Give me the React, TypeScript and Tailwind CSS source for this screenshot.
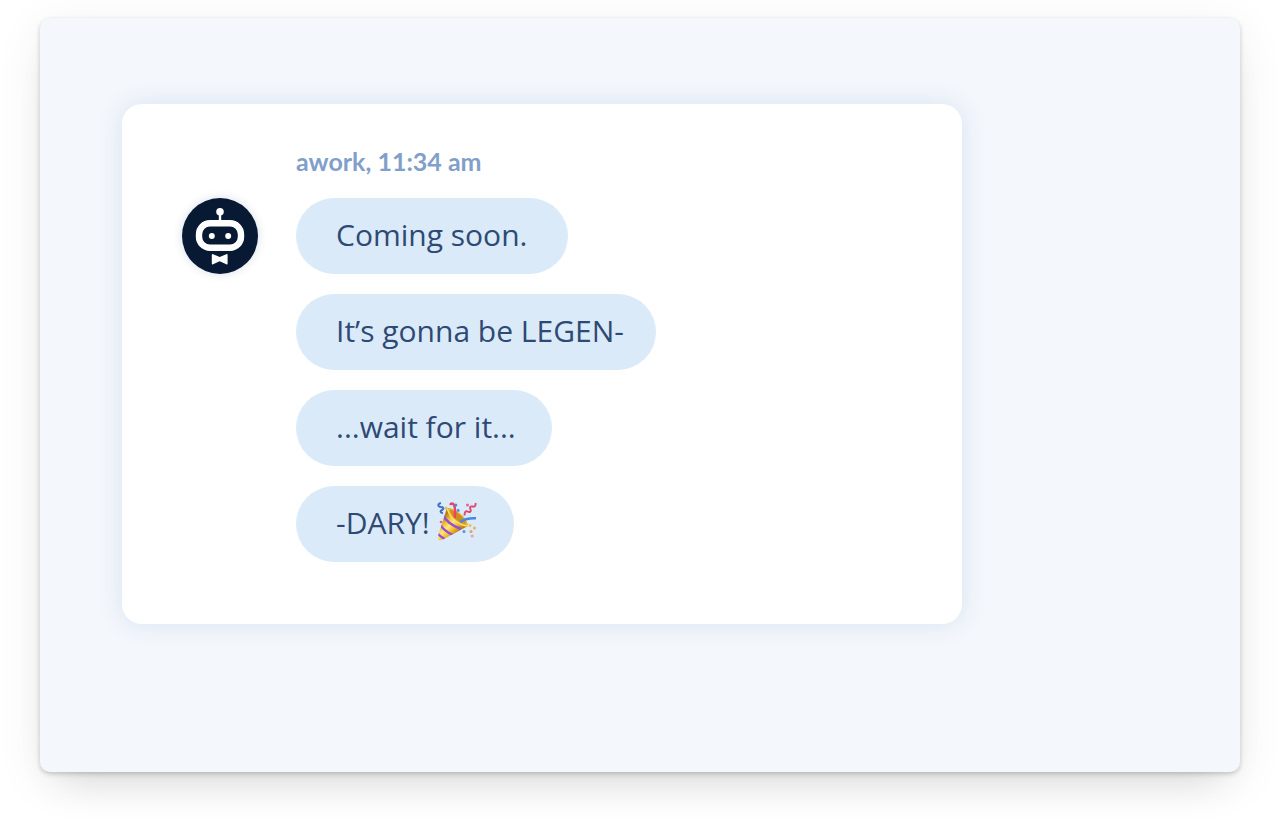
interface Message {
  text: string;
  width: string;
  party?: boolean;
}

const messages: Message[] = [
  { text: 'Coming soon.', width: 'w-[272px]' },
  { text: 'It’s gonna be LEGEN-', width: 'w-[360px]' },
  { text: '...wait for it...', width: 'w-[256px]' },
  { text: '-DARY!', width: 'w-[218px]', party: true },
];

function BotAvatar() {
  return (
    <div className="size-19 shrink-0 rounded-full bg-[#071933] shadow-[0_0_10px_rgba(20,50,110,0.16)]">
      <svg viewBox="0 0 76 76" className="size-full" role="img" aria-label="awork bot">
        <circle cx="38" cy="13.8" r="3.8" fill="#fff" />
        <path d="M38 14v11" stroke="#fff" strokeWidth="2.4" />
        <rect x="17" y="25.2" width="42" height="24.6" rx="11" fill="none" stroke="#fff" strokeWidth="6.4" />
        <circle cx="29.8" cy="38" r="3" fill="#fff" />
        <circle cx="46.2" cy="38" r="3" fill="#fff" />
        <path
          d="M29.8 57q0-1.4 1.3-.8l6.6 2.7 6.6-2.7q1.3-.6 1.3.8v8.4q0 1.4-1.3.8l-6.6-2.9-6.6 2.9q-1.3.6-1.3-.8z"
          fill="#fff"
        />
      </svg>
    </div>
  );
}

function PartyPopper() {
  return (
    <svg viewBox="0 0 40 40" className="size-10" fill="none" role="img" aria-label="party popper">
      <defs>
        <linearGradient id="cone" x1="4" y1="17" x2="19" y2="32" gradientUnits="userSpaceOnUse">
          <stop stopColor="#b97816" />
          <stop offset=".25" stopColor="#f0bd2d" />
          <stop offset=".5" stopColor="#ffe878" />
          <stop offset=".75" stopColor="#f3bd2b" />
          <stop offset="1" stopColor="#bd7d1a" />
        </linearGradient>
        <clipPath id="coneClip">
          <path d="M10 6 1 34c-1 4 1.5 5 5 3.5L31 24C29 15 20 7 10 6z" />
        </clipPath>
      </defs>
      <path d="M10 6 1 34c-1 4 1.5 5 5 3.5L31 24C29 15 20 7 10 6z" fill="url(#cone)" />
      <g clipPath="url(#coneClip)" stroke="#9150d8" strokeWidth="2.4">
        <path d="M6 13c2 5 9 11 18 14" />
        <path d="M3 22c2 4 6 8 13 11" />
        <path d="M0 31c2 2 4 4 8 6" />
      </g>
      <path d="M10 6c8 0 19 8 21 17.5-1.5 2-7 .5-12-4S9 9 10 6z" fill="#e8b12e" />
      <path d="M13 8c7 1 14 7 16 13.5-4 0-8-2-11-5S13 10 13 8z" fill="#c98f24" />
      <path d="M10.5 6.5C11 11 15 16.5 20 20s9 4.500 11 3.500" stroke="#ffe066" strokeWidth="1.3" />
      <path d="M17.7 16c.6-5 .8-10-.7-13-1-2-3-2-4-.2" stroke="#ef4168" strokeWidth="2.4" />
      <path d="M23 20c5-3.5 10-4 16-3.700" stroke="#4687e6" strokeWidth="2.6" />
      <path d="M4 1C0 2 1 5 4 5s3 2 1 3-2 3 1 3" stroke="#416fc9" strokeWidth="2" />
      <path d="M38.5 1c.5 3-1 4-3 3.5s-3 .5-2 3-1 3-3 2-3 1-3 4" stroke="#e0446f" strokeWidth="1.9" />
      <circle cx="18.8" cy="3" r="1.5" fill="#4c8ae0" />
      <circle cx="30.5" cy="3" r="1.5" fill="#e5668b" />
      <circle cx="21.2" cy="8.5" r="1.4" fill="#4f8de2" />
      <circle cx="9" cy="6" r="1.3" fill="#e9c03c" />
      <circle cx="4" cy="20" r="1.3" fill="#db6480" />
      <circle cx="33" cy="23.5" r="1.5" fill="#edc23e" />
      <circle cx="37.5" cy="26" r="1.5" fill="#e8ad6a" />
      <circle cx="27" cy="29.5" r="1.5" fill="#5592e2" />
      <circle cx="34" cy="29.5" r="1.6" fill="#e6a552" />
      <circle cx="35.2" cy="34" r="1.6" fill="#e4a5b9" />
    </svg>
  );
}

function Bubble({ text, width, party }: Message) {
  return (
    <li className={`flex h-19 items-center gap-[7px] rounded-full bg-[#dbeaf9] pb-0.5 pl-10 ${width}`}>
      <span className="whitespace-nowrap">{text}</span>
      {party && (
        <span className="shrink-0 pb-0.5">
          <PartyPopper />
        </span>
      )}
    </li>
  );
}

export default function App() {
  return (
    <div className="bg-white px-10 pt-[18px] pb-15">
      <main className="min-h-[754px] rounded-[10px] bg-[#f4f7fc] px-[82px] py-[86px] shadow-[0_2px_5px_rgba(0,0,0,0.2),0_10px_50px_rgba(0,0,0,0.07),0_25px_40px_-20px_rgba(0,0,0,0.12)]">
        {/* Chat card */}
        <section className="max-w-[840px] rounded-[20px] bg-white px-15 pt-[38px] pb-[62px] shadow-[0_0_24px_rgba(70,120,180,0.15)]">
          <div className="flex items-start gap-[38px]">
            <div className="pt-14">
              <BotAvatar />
            </div>
            <div>
              <h1 className="mb-[18px] font-['Lato',sans-serif] text-[25px] leading-[38px] font-bold text-[#819fca]">
                awork, 11:34 am
              </h1>
              <ul className="flex flex-col gap-5 font-['Open_Sans',sans-serif] text-[30px] leading-10 text-[#2e4a74]">
                {messages.map((message) => (
                  <Bubble key={message.text} {...message} />
                ))}
              </ul>
            </div>
          </div>
        </section>
      </main>
    </div>
  );
}
